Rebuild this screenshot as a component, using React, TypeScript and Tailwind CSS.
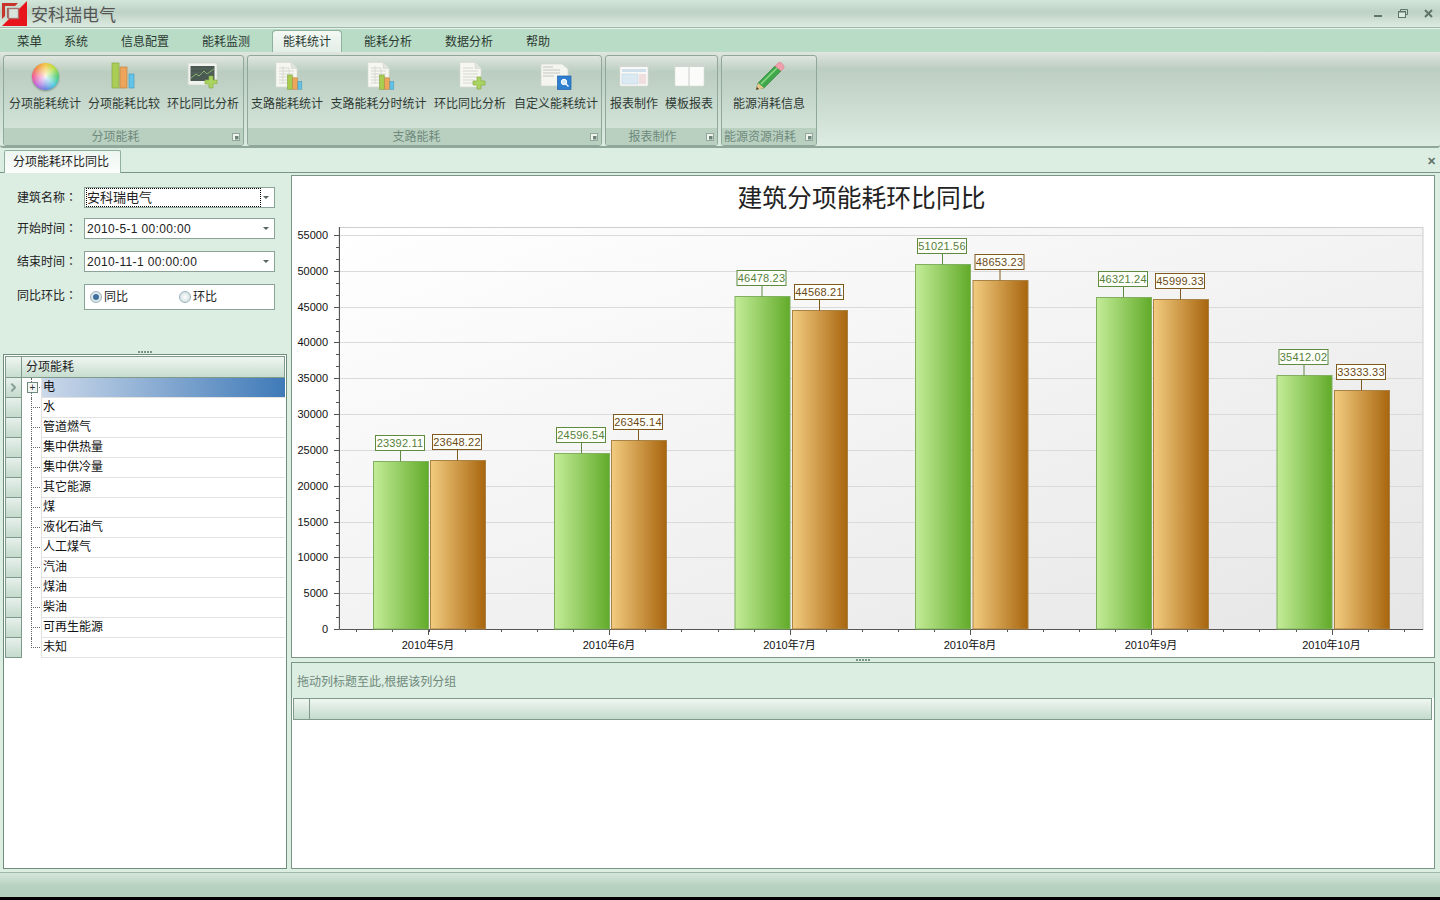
import { ChevronRight } from "lucide-react";

const font = "font-['Liberation_Sans','Noto_Sans_CJK_SC',sans-serif]";

const menus = ["系统", "信息配置", "能耗监测", "能耗统计", "能耗分析", "数据分析", "帮助"];

const treeRows = [
  "电",
  "水",
  "管道燃气",
  "集中供热量",
  "集中供冷量",
  "其它能源",
  "煤",
  "液化石油气",
  "人工煤气",
  "汽油",
  "煤油",
  "柴油",
  "可再生能源",
  "未知",
];

const chartData = [
  { month: "2010年5月", a: 23392.11, b: 23648.22, ax: 373, bx: 430 },
  { month: "2010年6月", a: 24596.54, b: 26345.14, ax: 554, bx: 611 },
  { month: "2010年7月", a: 46478.23, b: 44568.21, ax: 734.5, bx: 792 },
  { month: "2010年8月", a: 51021.56, b: 48653.23, ax: 915, bx: 972.5 },
  { month: "2010年9月", a: 46321.24, b: 45999.33, ax: 1096, bx: 1153 },
  { month: "2010年10月", a: 35412.02, b: 33333.33, ax: 1276.5, bx: 1334 },
];

const axisSteps = [0, 5000, 10000, 15000, 20000, 25000, 30000, 35000, 40000, 45000, 50000, 55000];

const yOf = (v: number) => 629 - (v * 394) / 55000;

function Logo() {
  return (
    <svg width="28" height="27" viewBox="0 0 28 27" className="shrink-0">
      <path d="M2 26 L27 1 V26 Z" fill="#e8141c" />
      <path d="M2 3 H18 L15 6 H5 V16 L2 19 Z" fill="#c8342c" />
      <path d="M7 8 H16 V10 H9 V18 H7 Z" fill="#a8605c" />
      <rect x="8.5" y="8.5" width="10" height="10" fill="#d8e3db" stroke="#a8706a" strokeWidth="1.3" />
    </svg>
  );
}

function WindowButtons() {
  return (
    <div className="ml-auto flex items-center gap-[16px] pr-[7px]">
      <svg width="8" height="8" viewBox="0 0 8 8">
        <rect x="0" y="5" width="8" height="2" fill="#5f7568" />
      </svg>
      <svg width="10" height="9" viewBox="0 0 10 9">
        <path d="M2.5 2 V0.5 H9.5 V5.5 H7.5" fill="none" stroke="#5f7568" />
        <rect x="0.5" y="2.5" width="7" height="6" fill="#dcebe1" stroke="#5f7568" />
        <rect x="0.5" y="2" width="7" height="1.5" fill="#5f7568" />
      </svg>
      <svg width="9" height="9" viewBox="0 0 9 9">
        <path d="M1 1 L8 8 M8 1 L1 8" stroke="#5f7568" strokeWidth="2" />
      </svg>
    </div>
  );
}

function MiniBars({ x, y, scale = 1 }: { x: number; y: number; scale?: number }) {
  return (
    <g transform={`translate(${x} ${y}) scale(${scale})`}>
      <rect x="0" y="0" width="5" height="15" fill="#a9cd4f" stroke="#7f9f3c" strokeWidth="0.6" />
      <rect x="5.5" y="3" width="5" height="12" fill="#eea75a" stroke="#b9803f" strokeWidth="0.6" />
      <rect x="11" y="7" width="4" height="8" fill="#63c3e8" stroke="#4b98b8" strokeWidth="0.6" />
    </g>
  );
}

function Plus({ x, y }: { x: number; y: number }) {
  return (
    <path
      transform={`translate(${x} ${y})`}
      d="M4 0 H8 V4 H12 V8 H8 V12 H4 V8 H0 V4 H4 Z"
      fill="#a9d45f"
      stroke="#86ad4a"
      strokeWidth="0.7"
    />
  );
}

function Page({ x = 5 }: { x?: number }) {
  return (
    <g transform={`translate(${x} 0)`}>
      <path d="M0 0.5 H15 L21 6.5 V25 H0 Z" fill="#f7f7f2" stroke="#d8dbd2" strokeWidth="0.7" />
      <path d="M15 0.5 V6.5 H21" fill="#e2e4dc" stroke="#cfd2c8" strokeWidth="0.5" />
      <path d="M3 6 H13 M3 9 H18 M3 12 H18 M3 15 H18 M3 18 H15 M3 21 H15" stroke="#cfd2cb" strokeWidth="0.9" />
    </g>
  );
}

function WheelIcon() {
  return (
    <div className="relative size-[27px] rounded-full bg-[conic-gradient(#f2c63c,#b4dc3c,#42c86a,#3cc4d8,#5a78e0,#b85ad8,#f0508c,#f08a3c,#f2c63c)] shadow-[0_1px_2px_#7a8a80]">
      <div className="absolute inset-0 rounded-full bg-[radial-gradient(circle_at_50%_52%,#ffffffe0_0%,#ffffff70_38%,#ffffff00_70%)]" />
    </div>
  );
}

function Icon({ name }: { name: string }) {
  if (name === "wheel") return <WheelIcon />;
  return (
    <svg width="32" height="28" viewBox="0 0 32 28">
      {name === "bars" && (
        <g>
          <rect x="4" y="1" width="7" height="25" fill="#aacd55" stroke="#8aa944" strokeWidth="0.7" />
          <rect x="12" y="5" width="7" height="21" fill="#eda55c" stroke="#c08542" strokeWidth="0.7" />
          <rect x="21" y="12" width="5" height="14" fill="#63c4ea" stroke="#4a9fc0" strokeWidth="0.7" />
        </g>
      )}
      {name === "monitor" && (
        <g>
          <rect x="1" y="1" width="29" height="22" rx="1" fill="#f1f3ee" stroke="#cfd4cc" strokeWidth="0.8" />
          <rect x="3.5" y="4" width="24" height="15" fill="#4a5a52" />
          <path d="M4 16 L9 12 L12 14 L17 9 L20 12 L27 7" stroke="#92c06c" strokeWidth="0.9" fill="none" />
          <path d="M4 11 H27 M4 7 H27" stroke="#66756d" strokeWidth="0.5" />
          <Plus x={18} y={14} />
        </g>
      )}
      {name === "docbars" && (
        <g>
          <Page x={5} />
          <path d="M12 4 V21 M18 6 V21" stroke="#d5d7d0" strokeWidth="0.8" />
          <MiniBars x={16.5} y={13} scale={0.95} />
        </g>
      )}
      {name === "docplus" && (
        <g>
          <Page x={6} />
          <Plus x={19} y={15} />
        </g>
      )}
      {name === "docsearch" && (
        <g>
          <path d="M1 2 H22 L28 7 V24 H1 Z" fill="#f5f5f0" stroke="#d4d6cf" strokeWidth="0.7" />
          <path d="M3 5 H13 M3 8 H20 M3 11 H20 M3 14 H14" stroke="#c3c6c2" strokeWidth="1" />
          <rect x="17.5" y="14" width="13.5" height="13.5" fill="#2f7fd0" stroke="#1f5fa8" strokeWidth="0.7" />
          <circle cx="24" cy="20" r="2.7" fill="#cfe6fa" stroke="#fff" strokeWidth="1" />
          <path d="M26 22 L28.5 24.5" stroke="#fff" strokeWidth="1.2" />
        </g>
      )}
      {name === "report" && (
        <g>
          <rect x="2" y="1" width="28" height="23" rx="1" fill="#f8f8f6" stroke="#dcdeda" strokeWidth="0.6" />
          <rect x="2" y="1" width="28" height="4" fill="#cfd6d0" />
          <rect x="4" y="7" width="24" height="3" fill="#cfe0ec" />
          <rect x="4" y="12" width="16" height="10" fill="#dbe9f2" stroke="#bcd2e0" strokeWidth="0.5" />
          <rect x="21" y="12" width="7" height="10" fill="#f0dede" />
        </g>
      )}
      {name === "template" && (
        <g>
          <rect x="2" y="1" width="29" height="23" rx="1" fill="#fbfbfa" stroke="#dcdeda" strokeWidth="0.6" />
          <rect x="2" y="1" width="29" height="4" fill="#cfd6d0" />
          <path d="M16 5 V24" stroke="#bfc5c0" strokeWidth="0.8" />
        </g>
      )}
      {name === "pencil" && (
        <g>
          <path d="M5 21 L22 4 L28 9 L11 26 L3.5 27 Z" fill="#3fa84a" stroke="#2c7d36" strokeWidth="0.6" />
          <path d="M8 22 L24 6" stroke="#8fdc8c" strokeWidth="1.5" />
          <path d="M3 28 L5 21 L11 26 Z" fill="#e8c68c" />
          <path d="M3 28 L4 25 L6 27 Z" fill="#4a3a20" />
          <path d="M22 4 L25 1 Q27 -0.5 29 1.5 L31 4 Q31.5 6 30 7 L28 9 Z" fill="#f0a0ac" stroke="#d47c8c" strokeWidth="0.5" />
        </g>
      )}
    </svg>
  );
}

function RibbonButton({ icon, label, width }: { icon: string; label: string; width: string }) {
  return (
    <div className={`flex flex-col items-center ${width}`}>
      <div className="flex h-[28px] items-center justify-center">
        <Icon name={icon} />
      </div>
      <div className="mt-[6px] h-[16px] text-center text-[12px] leading-[16px] whitespace-nowrap text-[#2f3a34]">
        {label}
      </div>
    </div>
  );
}

function Launcher() {
  return (
    <svg width="8" height="8" viewBox="0 0 8 8" className="shrink-0">
      <rect x="0.5" y="0.5" width="7" height="7" fill="#eef3ef" stroke="#93a89b" />
      <rect x="3" y="3" width="3.5" height="3.5" fill="#6f8478" />
    </svg>
  );
}

function RibbonGroup({
  title,
  width,
  children,
  gap,
  pad,
  labelPad,
}: {
  title: string;
  width: string;
  children: React.ReactNode;
  gap: string;
  pad: string;
  labelPad: string;
}) {
  return (
    <div className={`flex h-[91px] shrink-0 flex-col overflow-hidden rounded-[3px] border border-[#8fa899] bg-[linear-gradient(#dfe6df_0%,#bacdc0_18%,#d9e9de_100%)] ${width}`}>
      <div className={`flex flex-1 pt-[6px] ${gap} ${pad}`}>{children}</div>
      <div className={`relative flex h-[17px] items-center justify-center bg-[#b9d0c1] ${labelPad}`}>
        <span className="text-[12px] leading-none whitespace-nowrap text-[#6f8a7b]">{title}</span>
        <div className="absolute right-[3px] top-[5px]">
          <Launcher />
        </div>
      </div>
    </div>
  );
}

function Arrow() {
  return <span className="h-0 w-0 border-x-[3px] border-t-[3px] border-x-transparent border-t-[#55655c]" />;
}

function FieldLabel({ text, extra }: { text: string; extra?: string }) {
  return (
    <div className={`w-[67px] text-[12px] whitespace-nowrap text-[#222] ${extra ?? ""}`}>
      {text}
      <span className="font-['Noto_Sans_CJK_TC']">：</span>
    </div>
  );
}

function FormRow({ label, value, mt, focus }: { label: string; value: string; mt: string; focus?: boolean }) {
  return (
    <div className={`flex items-center ${mt}`}>
      <FieldLabel text={label} />
      <div className={`flex h-[21px] w-[191px] items-center border border-[#8aa396] bg-white pr-[5px] ${focus ? "pl-[1px]" : "pl-[2px]"}`}>
        <div
          className={`flex h-full flex-1 items-center text-[#222] ${
            focus ? "border border-dotted border-black text-[13px]" : "text-[12px] tracking-[0.35px]"
          }`}
        >
          {value}
        </div>
        <div className={`flex justify-end ${focus ? "w-[8px]" : "w-[13px]"}`}>
          <Arrow />
        </div>
      </div>
    </div>
  );
}

function Radio({ on }: { on?: boolean }) {
  return (
    <span className="flex size-[12px] items-center justify-center rounded-full border border-[#9ab4c0] bg-[radial-gradient(#fff,#c9d6d8)]">
      {on && <span className="size-[6px] rounded-full bg-[#3f6f9f]" />}
    </span>
  );
}

function Dots() {
  return (
    <div className="flex h-[4px] justify-center gap-[1px]">
      {[0, 1, 2, 3, 4].map((i) => (
        <span key={i} className="mt-[1px] size-[2px] bg-[#7b9486]" />
      ))}
    </div>
  );
}

function TreeRow({ label, index }: { label: string; index: number }) {
  const selected = index === 0;
  const last = index === treeRows.length - 1;
  return (
    <div className="flex h-[20px]">
      <div className="flex w-[17px] shrink-0 items-center justify-center border-x border-b border-[#7f9a8b] bg-[linear-gradient(#e6f0ea,#c5dacd)]">
        {selected && <ChevronRight size={13} strokeWidth={3.5} className="text-[#88a095]" />}
      </div>
      <div className="relative w-[19px] shrink-0">
        <span className={`absolute left-[9px] top-0 w-0 border-l border-dotted border-[#666] ${last ? "h-[10px]" : "h-[20px]"}`} />
        <span className="absolute left-[9px] top-[9px] h-0 w-[9px] border-t border-dotted border-[#666]" />
        {selected && (
          <span className="absolute left-[5px] top-[4px] flex size-[11px] items-center justify-center border border-[#6f8a7b] bg-[#f2f6f3] text-[10px] leading-none text-[#333]">
            +
          </span>
        )}
      </div>
      <div
        className={`flex-1 border-b border-l border-[#e2e2e2] pl-[1px] text-[12px] leading-[19px] text-[#111] ${
          selected ? "bg-[linear-gradient(90deg,#ccd9ea,#3f7ab8)]" : "bg-white"
        }`}
      >
        {label}
      </div>
    </div>
  );
}

function ChartBar({ x, value, kind }: { x: number; value: number; kind: "a" | "b" }) {
  const top = Math.round(yOf(value)) + 0.5;
  const w = 55;
  const cx = x + w / 2;
  const line = kind === "a" ? "#5f8a42" : "#80591f";
  return (
    <g>
      <rect
        x={x + 0.5}
        y={top}
        width={w}
        height={629 - top}
        fill={kind === "a" ? "url(#greenBar)" : "url(#orangeBar)"}
        stroke={kind === "a" ? "#80b060" : "#a98246"}
      />
      <path d={`M${cx} ${top} V${top - 11}`} stroke={line} />
      <rect x={cx - 25} y={top - 26} width={49} height={15} fill="#fffffa" stroke={line} />
      <text x={cx - 0.5} y={top - 15} textAnchor="middle" fontSize="11" letterSpacing="0.2" fill={kind === "a" ? "#55803c" : "#6a4a18"}>
        {value.toFixed(2)}
      </text>
    </g>
  );
}

function Chart() {
  const minorY: number[] = [];
  for (let i = 0; i < 33; i++) minorY.push(629 - (i * 394) / 33);
  const minorX: number[] = [];
  for (let i = -2; i < 28; i++) minorX.push(428.5 + i * 36.13);
  return (
    <svg width="1142" height="430" viewBox="292 227 1142 430" className={font}>
      <defs>
        <linearGradient id="plotBg" x1="0" y1="0" x2="1" y2="1">
          <stop offset="0" stopColor="#ffffff" />
          <stop offset="1" stopColor="#e6e6e6" />
        </linearGradient>
        <linearGradient id="greenBar">
          <stop offset="0" stopColor="#c4ec98" />
          <stop offset="1" stopColor="#62ab2a" />
        </linearGradient>
        <linearGradient id="orangeBar">
          <stop offset="0" stopColor="#f2cc80" />
          <stop offset="1" stopColor="#a8650e" />
        </linearGradient>
      </defs>
      <rect x="339" y="227.5" width="1084" height="402" fill="url(#plotBg)" stroke="#cfcfcf" />
      {axisSteps.slice(1).map((v) => (
        <path key={v} d={`M339 ${Math.round(yOf(v)) + 0.5} H1423`} stroke="#dadada" />
      ))}
      <path d="M339.5 227 V629.5 H1423" fill="none" stroke="#555" />
      {minorY.map((y) => (
        <path key={y} d={`M336 ${Math.round(y) + 0.5} H339`} stroke="#555" />
      ))}
      {axisSteps.map((v) => (
        <g key={v}>
          <path d={`M334 ${Math.round(yOf(v)) + 0.5} H339`} stroke="#555" />
          <text x="328" y={yOf(v) + 4} textAnchor="end" fontSize="11" fill="#111">
            {v}
          </text>
        </g>
      ))}
      {minorX
        .filter((x) => x > 340 && x < 1423)
        .map((x) => (
          <path key={x} d={`M${Math.round(x) + 0.5} 630 V632`} stroke="#555" />
        ))}
      {chartData.map((d) => (
        <g key={d.month}>
          <ChartBar x={d.ax} value={d.a} kind="a" />
          <ChartBar x={d.bx} value={d.b} kind="b" />
          <path d={`M${Math.round(d.ax + 55) + 0.5} 630 V635`} stroke="#555" />
          <text x={d.ax + 55} y={649} textAnchor="middle" fontSize="11" fill="#111">
            {d.month}
          </text>
        </g>
      ))}
    </svg>
  );
}

export default function App() {
  return (
    <div className={`flex h-[900px] w-[1440px] flex-col overflow-hidden bg-[#dcede2] ${font}`}>
      {/* title bar */}
      <div className="flex h-[28px] shrink-0 items-center border-b border-[#9db8a8] bg-[linear-gradient(#d3e6da_0%,#bfd2c6_45%,#dcebe1_100%)]">
        <Logo />
        <span className="ml-[3px] mt-[3px] text-[17px] leading-none text-[#555]">安科瑞电气</span>
        <WindowButtons />
      </div>

      {/* menu row */}
      <div className="flex h-[24px] shrink-0 items-end gap-[11px] border-t border-[#e6f2ea] bg-[#b9dcc6] pl-[6px] text-[12px] text-[#2c3a32]">
        <span className="pb-[1px] pl-[11px] text-[12.5px] leading-[18px]">菜单</span>
        {menus.map((m) =>
          m === "能耗统计" ? (
            <span
              key={m}
              className="h-[22px] rounded-t-[4px] border border-b-0 border-[#8fb09d] bg-[linear-gradient(#f4f9f5,#e2eee6)] px-[10px] pt-[2px] leading-[18px]"
            >
              {m}
            </span>
          ) : (
            <span key={m} className="px-[11px] pb-[1px] leading-[18px]">
              {m}
            </span>
          ),
        )}
      </div>

      {/* ribbon */}
      <div className="flex h-[96px] shrink-0 gap-[3px] rounded-b-[3px] border-b-2 border-[#8fa899] bg-[linear-gradient(#e0e6e0_0%,#bccdc1_18%,#dcece2_100%)] pl-[3px] pt-[3px]">
        <RibbonGroup title="分项能耗" width="w-[241px]" gap="gap-[7px]" pad="pl-[5px]" labelPad="pr-[16px]">
          <RibbonButton icon="wheel" label="分项能耗统计" width="w-[72px]" />
          <RibbonButton icon="bars" label="分项能耗比较" width="w-[72px]" />
          <RibbonButton icon="monitor" label="环比同比分析" width="w-[72px]" />
        </RibbonGroup>
        <RibbonGroup title="支路能耗" width="w-[355px]" gap="gap-[8px]" pad="pl-[3px]" labelPad="pr-[16px]">
          <RibbonButton icon="docbars" label="支路能耗统计" width="w-[72px]" />
          <RibbonButton icon="docbars" label="支路能耗分时统计" width="w-[95px]" />
          <RibbonButton icon="docplus" label="环比同比分析" width="w-[72px]" />
          <RibbonButton icon="docsearch" label="自定义能耗统计" width="w-[84px]" />
        </RibbonGroup>
        <RibbonGroup title="报表制作" width="w-[113px]" gap="gap-[7px]" pad="pl-[4px]" labelPad="pr-[18px]">
          <RibbonButton icon="report" label="报表制作" width="w-[48px]" />
          <RibbonButton icon="template" label="模板报表" width="w-[48px]" />
        </RibbonGroup>
        <RibbonGroup title="能源资源消耗" width="w-[96px]" gap="gap-0" pad="pl-[11px]" labelPad="pr-[18px]">
          <RibbonButton icon="pencil" label="能源消耗信息" width="w-[72px]" />
        </RibbonGroup>
      </div>

      {/* document tab strip */}
      <div className="flex h-[25px] shrink-0 items-end border-b border-[#7a9686] pl-[4px]">
        <div className="-mb-px h-[23px] w-[117px] rounded-t-[2px] border border-b-0 border-[#8fb09d] bg-[linear-gradient(#eef6f1,#fbfdfb)] pl-[8px] text-[12px] leading-[23px] text-[#222]">
          分项能耗环比同比
        </div>
        <span className="mb-[5px] ml-auto pr-[4px] text-[11px] font-bold leading-none text-[#5f7568]">✕</span>
      </div>

      {/* body */}
      <div className="flex h-[696px] shrink-0 gap-[4px] pl-[3px] pt-[2px]">
        <div className="flex w-[284px] shrink-0 flex-col">
          <div className="h-[175px] shrink-0 pl-[14px] pt-[12px]">
            <FormRow label="建筑名称" value="安科瑞电气" mt="mt-0" focus />
            <FormRow label="开始时间" value="2010-5-1 00:00:00" mt="mt-[10px]" />
            <FormRow label="结束时间" value="2010-11-1 00:00:00" mt="mt-[12px]" />
            <div className="mt-[12px] flex items-start">
              <FieldLabel text="同比环比" extra="mt-[2px]" />
              <div className="flex h-[26px] w-[191px] items-center border border-[#8aa396] bg-white pl-[5px] text-[12px] text-[#222]">
                <Radio on />
                <span className="ml-[2px] w-[75px]">同比</span>
                <Radio />
                <span className="ml-[2px]">环比</span>
              </div>
            </div>
          </div>
          <Dots />
          <div className="flex flex-1 flex-col border border-[#6f8c7c] bg-white p-px">
            <div className="flex h-[22px] shrink-0 border border-[#7f9a8b] bg-[linear-gradient(#eff6f1,#c7ddcf)]">
              <div className="w-[16px] shrink-0 border-r border-[#7f9a8b]" />
              <div className="pl-[4px] text-[12px] leading-[20px] text-[#222]">分项能耗</div>
            </div>
            {treeRows.map((r, i) => (
              <TreeRow key={r} label={r} index={i} />
            ))}
          </div>
        </div>

        <div className="flex w-[1144px] shrink-0 flex-col">
          <div className="h-[483px] shrink-0 border border-[#7a9686] bg-white">
            <div className="flex h-[51px] items-center justify-center pb-[4px] pr-[3px] text-[24.8px] leading-none text-[#222]">
              建筑分项能耗环比同比
            </div>
            <Chart />
          </div>
          <Dots />
          <div className="flex flex-1 flex-col border border-[#7a9686] bg-white">
            <div className="flex h-[35px] shrink-0 items-center bg-[#dcede2] pl-[5px] pt-[2px] text-[12px] text-[#6f8a7b]">
              拖动列标题至此,根据该列分组
            </div>
            <div className="ml-[1px] mr-[2px] flex h-[22px] shrink-0 border border-[#7f9a8b] bg-[linear-gradient(#eff6f1,#c4dbcc)]">
              <div className="w-[16px] border-r border-[#7f9a8b]" />
            </div>
          </div>
        </div>
      </div>

      {/* status bar */}
      <div className="mt-[3px] h-[25px] shrink-0 border-t border-[#9db8a8] bg-[linear-gradient(#d6e6dc_0%,#b6d1c0_55%,#b4cfbe_100%)]" />
      <div className="h-[3px] shrink-0 bg-black" />
    </div>
  );
}
